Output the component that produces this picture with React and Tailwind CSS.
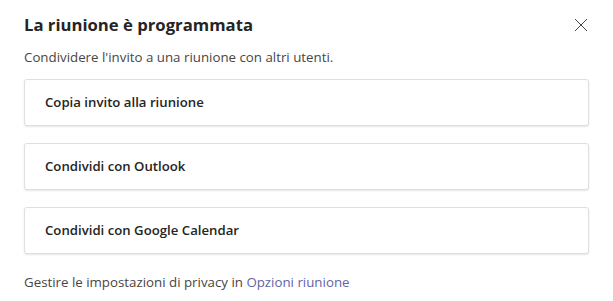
import React from "react";

function Card({ label }) {
  return (
    <button className="flex h-[47px] w-full items-center rounded-[3px] border border-[#e1dfdd] bg-white pl-[20px] text-left text-[13.2px] font-semibold text-[#252423] shadow-[0_1px_2px_rgba(0,0,0,0.1)]">
      {label}
    </button>
  );
}

export default function App() {
  return (
    <div className="h-[301px] w-[613px] bg-white font-['Open_Sans',sans-serif]">
      <div className="flex flex-col px-[24px] pt-[12px]">
        <div className="flex h-[26px] items-center justify-between">
          <h1 className="text-[16.7px] font-bold text-[#252423]">La riunione è programmata</h1>
          <svg width="14" height="14" viewBox="0 0 14 14" className="mr-[1px]">
            <path d="M1 1L13 13M13 1L1 13" stroke="#484644" strokeWidth="1" />
          </svg>
        </div>
        <p className="mt-[9px] text-[13.3px] leading-[20px] text-[#484644]">
          Condividere l'invito a una riunione con altri utenti.
        </p>
        <div className="mt-[12px] flex flex-col gap-[17px]">
          <Card label="Copia invito alla riunione" />
          <Card label="Condividi con Outlook" />
          <Card label="Condividi con Google Calendar" />
        </div>
        <p className="mt-[18px] text-[13.3px] leading-[20px] text-[#484644]">
          Gestire le impostazioni di privacy in{" "}
          <span className="text-[#6264a7]">Opzioni riunione</span>
        </p>
      </div>
    </div>
  );
}
